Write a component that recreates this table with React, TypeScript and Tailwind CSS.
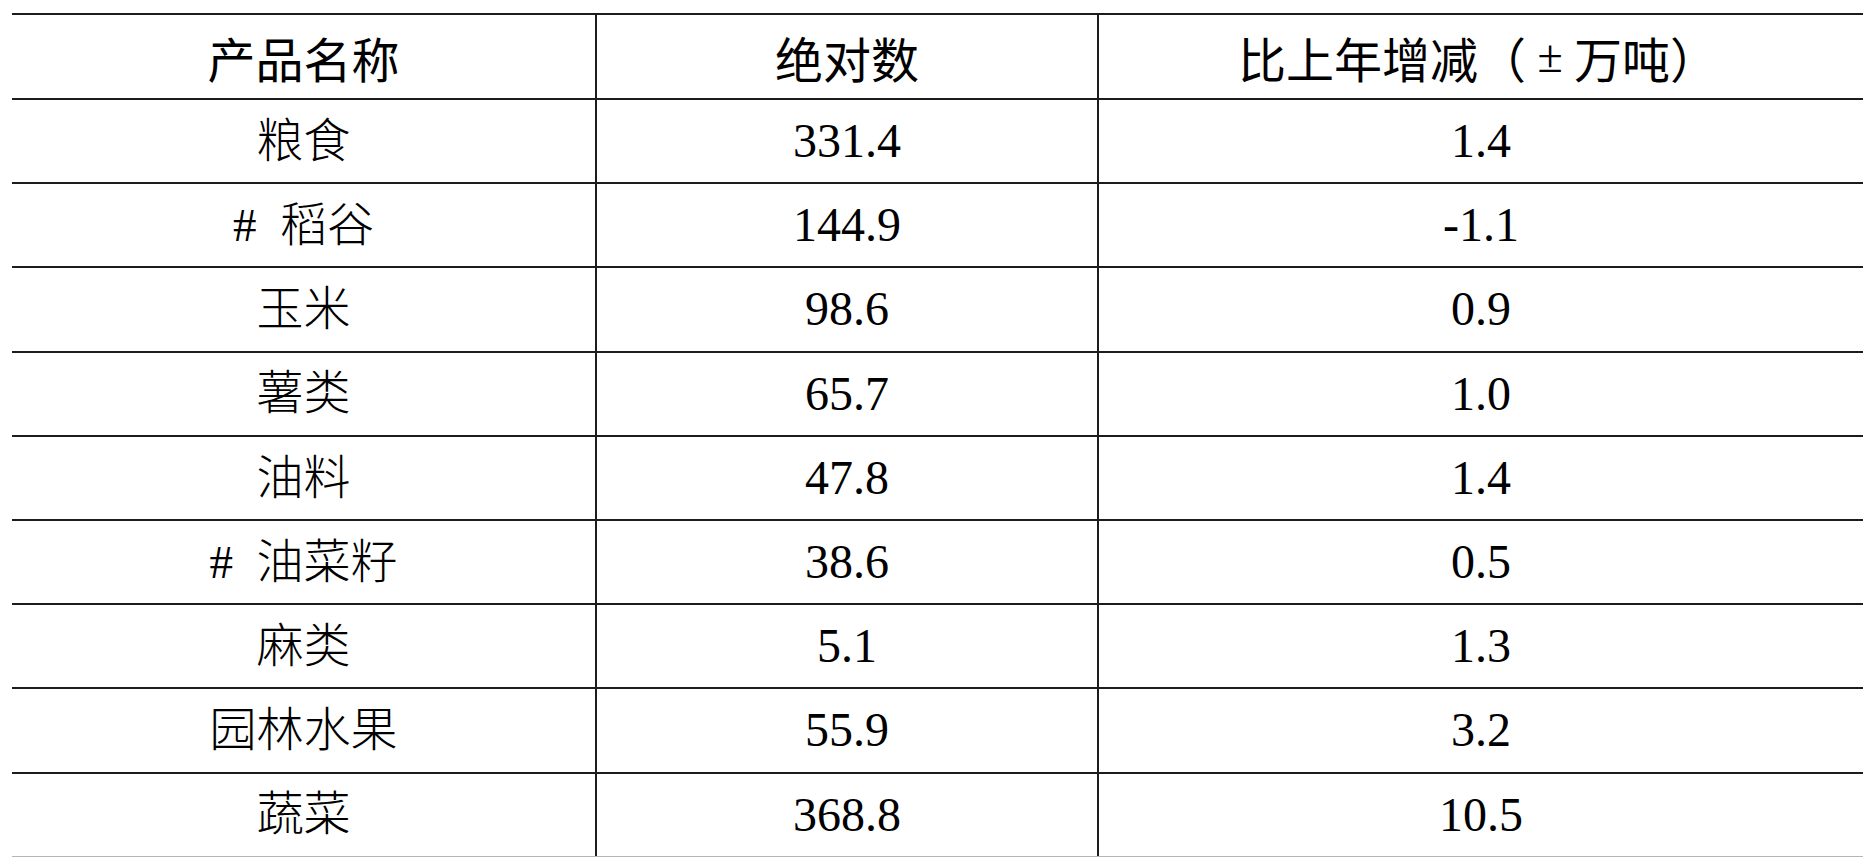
import React from 'react';

type Row = { name: string; value: string; change: string };

const rows: Row[] = [
  { name: '粮食', value: '331.4', change: '1.4' },
  { name: '#\u2002稻谷', value: '144.9', change: '-1.1' },
  { name: '玉米', value: '98.6', change: '0.9' },
  { name: '薯类', value: '65.7', change: '1.0' },
  { name: '油料', value: '47.8', change: '1.4' },
  { name: '#\u2002油菜籽', value: '38.6', change: '0.5' },
  { name: '麻类', value: '5.1', change: '1.3' },
  { name: '园林水果', value: '55.9', change: '3.2' },
  { name: '蔬菜', value: '368.8', change: '10.5' },
];

const serif = "font-['Liberation_Serif','Noto_Sans_CJK_SC',serif]";
const hei = "font-['Noto_Sans_CJK_SC',sans-serif]";

const App: React.FC = () => {
  return (
    <div className="w-full h-screen bg-white overflow-hidden pt-[13px] pl-[12px] text-black">
      <div className="border-t-2 border-[#1c1c1c]">
        {/* 表头 */}
        <div className={`flex h-[85px] border-b-2 border-[#1c1c1c] text-[48px] leading-none ${hei}`}>
          <div className="w-[585px] border-r-2 border-[#1c1c1c] flex items-center justify-center">产品名称</div>
          <div className="w-[502px] border-r-2 border-[#1c1c1c] flex items-center justify-center">绝对数</div>
          <div className="flex-1 flex items-center justify-center pr-[6px]">
            比上年增减（<span className="inline-block w-[48px] text-center font-['Liberation_Serif',serif] text-[46px]">±</span>万吨）
          </div>
        </div>

        {rows.map((r, i) => (
          <div
            key={i}
            className={`flex h-[84.2px] border-b-2 ${i === rows.length - 1 ? 'border-[#b5b5b5]' : 'border-[#1c1c1c]'}`}
          >
            <div className={`w-[585px] border-r-2 border-[#1c1c1c] flex items-center justify-center text-[47px] font-light ${serif}`}>
              {r.name}
            </div>
            <div className={`w-[502px] border-r-2 border-[#1c1c1c] flex items-center justify-center text-[48px] ${serif}`}>
              {r.value}
            </div>
            <div className={`flex-1 flex items-center justify-center text-[48px] ${serif}`}>
              {r.change}
            </div>
          </div>
        ))}
      </div>
    </div>
  );
};

export default App;
